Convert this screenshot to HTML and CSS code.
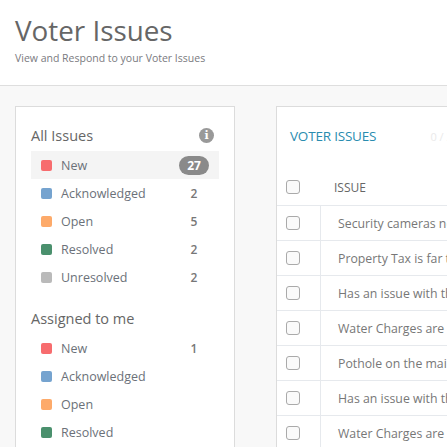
FILE: index.html
```html
<!DOCTYPE html>
<html>
<head>
<meta charset="utf-8">
<link rel="stylesheet" href="styles.css">
</head>
<body>
<header class="page-header">
  <h1 class="title">Voter Issues</h1>
  <p class="subtitle">View and Respond to your Voter Issues</p>
</header>
<main class="main">
  <section class="side-card">
    <div class="side-heading">
      <span>All Issues</span>
      <span class="info-icon">i</span>
    </div>
    <ul class="status-list">
      <li class="status-row active"><span class="swatch new"></span><span class="label">New</span><span class="count"><span class="badge">27</span></span></li>
      <li class="status-row"><span class="swatch ack"></span><span class="label">Acknowledged</span><span class="count">2</span></li>
      <li class="status-row"><span class="swatch open"></span><span class="label">Open</span><span class="count">5</span></li>
      <li class="status-row"><span class="swatch resolved"></span><span class="label">Resolved</span><span class="count">2</span></li>
      <li class="status-row"><span class="swatch unresolved"></span><span class="label">Unresolved</span><span class="count">2</span></li>
    </ul>
    <div class="side-heading second">
      <span>Assigned to me</span>
    </div>
    <ul class="status-list">
      <li class="status-row"><span class="swatch new"></span><span class="label">New</span><span class="count">1</span></li>
      <li class="status-row"><span class="swatch ack"></span><span class="label">Acknowledged</span><span class="count"></span></li>
      <li class="status-row"><span class="swatch open"></span><span class="label">Open</span><span class="count"></span></li>
      <li class="status-row"><span class="swatch resolved"></span><span class="label">Resolved</span><span class="count"></span></li>
    </ul>
  </section>
  <section class="table-card">
    <div class="table-title">
      <span class="table-name">VOTER ISSUES</span>
      <span class="table-meta">0 / 27</span>
    </div>
    <div class="table">
      <div class="thead">
        <div class="cell-check"><span class="checkbox"></span></div>
        <div class="th">ISSUE</div>
      </div>
      <div class="trow"><div class="cell-check"><span class="checkbox"></span></div><div class="td">Security cameras need to be installed</div></div>
      <div class="trow"><div class="cell-check"><span class="checkbox"></span></div><div class="td">Property Tax is far too high</div></div>
      <div class="trow"><div class="cell-check"><span class="checkbox"></span></div><div class="td">Has an issue with the street lights</div></div>
      <div class="trow"><div class="cell-check"><span class="checkbox"></span></div><div class="td">Water Charges are too high</div></div>
      <div class="trow"><div class="cell-check"><span class="checkbox"></span></div><div class="td">Pothole on the main road</div></div>
      <div class="trow"><div class="cell-check"><span class="checkbox"></span></div><div class="td">Has an issue with the garbage pickup</div></div>
      <div class="trow"><div class="cell-check"><span class="checkbox"></span></div><div class="td">Water Charges are too high</div></div>
    </div>
  </section>
</main>
</body>
</html>
```
FILE: styles.css
```css
html, body {
  margin: 0;
  padding: 0;
}
body {
  width: 447px;
  height: 447px;
  overflow: hidden;
  background: #f8f8f8;
  font-family: "Open Sans", "Noto Sans", sans-serif;
  color: #666;
}
.page-header {
  background: #fff;
  border-bottom: 1px solid #dedede;
  height: 86px;
  box-sizing: border-box;
  padding: 12px 15px 0;
}
.title {
  margin: 0;
  font-size: 27.8px;
  font-weight: 400;
  line-height: 36px;
  color: #666;
}
.subtitle {
  margin: 3px 0 0;
  font-size: 10.5px;
  line-height: 14px;
  color: #7a7a80;
}
.main {
  display: flex;
  gap: 41px;
  padding: 20px 0 0 15px;
  align-items: flex-start;
}
.side-card {
  flex: none;
  width: 220px;
  box-sizing: border-box;
  background: #fff;
  border: 1px solid #dcdcdc;
  padding: 18px 15px 0;
  height: 380px;
}
.side-heading {
  display: flex;
  justify-content: space-between;
  align-items: center;
  height: 20px;
  font-size: 14.5px;
  color: #666;
  margin-bottom: 6px;
  padding-right: 5px;
}
.side-heading.second {
  margin-top: 17px;
}
.info-icon {
  width: 15px;
  height: 15px;
  border-radius: 50%;
  background: #999;
  color: #fff;
  font-family: "DejaVu Serif", serif;
  font-weight: 700;
  font-size: 11px;
  line-height: 15px;
  text-align: center;
}
.status-list {
  list-style: none;
  margin: 0;
  padding: 0;
}
.status-row {
  display: flex;
  align-items: center;
  height: 28px;
  padding: 0 10px 0 10px;
  font-size: 12.5px;
}
.status-row.active {
  background: #f4f4f4;
}
.swatch {
  width: 11px;
  height: 11px;
  border-radius: 2px;
  margin-right: 9px;
  flex: none;
}
.swatch.new { background: #f76c6e; }
.swatch.ack { background: #75a3cf; }
.swatch.open { background: #fdaa6a; }
.swatch.resolved { background: #4a906d; }
.swatch.unresolved { background: #bababa; }
.label {
  flex: 1;
  color: #6b7179;
}
.count {
  width: 30px;
  text-align: center;
  font-weight: 600;
  color: #777;
  font-size: 12px;
}
.badge {
  display: block;
  height: 19px;
  line-height: 19px;
  border-radius: 10px;
  background: #8a8a8a;
  color: #fff;
  font-weight: 700;
  font-size: 12px;
}
.table-card {
  flex: none;
  width: 420px;
  box-sizing: border-box;
  background: #fff;
  border: 1px solid #dcdcdc;
  height: 380px;
}
.table-title {
  display: flex;
  justify-content: space-between;
  height: 20px;
  align-items: center;
  padding: 19px 10px 0 13px;
}
.table-name {
  color: #2a8caf;
  font-size: 13.5px;
  letter-spacing: -0.2px;
}
.table-meta {
  color: #eaeaea;
  font-size: 11px;
  margin-right: 226px;
}
.table {
  margin-top: 23px;
}
.thead {
  display: flex;
  align-items: center;
  height: 36px;
}
.thead .cell-check {
  border-right: none;
}
.th {
  padding-left: 13px;
  font-size: 12px;
  color: #666;
}
.trow {
  display: flex;
  height: 35px;
  box-sizing: border-box;
  border-top: 1px solid #e6e9ed;
}
.cell-check {
  width: 44px;
  flex: none;
  box-sizing: border-box;
  display: flex;
  align-items: center;
  padding-left: 9px;
  border-right: 1px solid #e6e9ed;
}
.checkbox {
  box-sizing: border-box;
  width: 14px;
  height: 14px;
  border: 1px solid #aaa;
  border-radius: 3px;
  background: #fafafa;
}
.td {
  display: flex;
  align-items: center;
  padding-left: 17px;
  font-size: 12.3px;
  color: #777;
  white-space: nowrap;
}
```
